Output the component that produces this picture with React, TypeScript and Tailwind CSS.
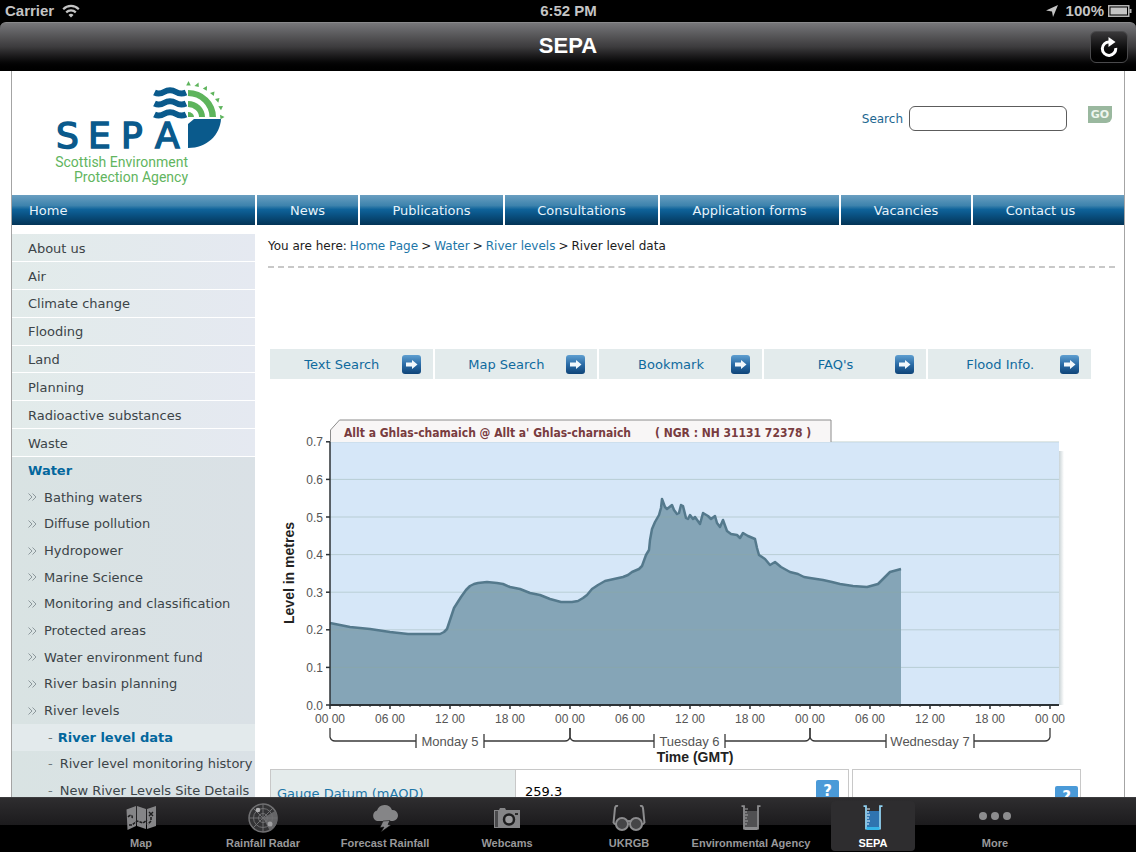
import type { ReactNode } from "react";

const topNav = ["Home", "News", "Publications", "Consultations", "Application forms", "Vacancies", "Contact us"];

const sections = [
  "About us",
  "Air",
  "Climate change",
  "Flooding",
  "Land",
  "Planning",
  "Radioactive substances",
  "Waste",
];

const waterPages = [
  "Bathing waters",
  "Diffuse pollution",
  "Hydropower",
  "Marine Science",
  "Monitoring and classification",
  "Protected areas",
  "Water environment fund",
  "River basin planning",
  "River levels",
];

const quickLinks = ["Text Search", "Map Search", "Bookmark", "FAQ's", "Flood Info."];

// x, y pairs in chart space: 10 units per hour, 330 is Monday 00:00
const levels: [number, number][] = [
  [330, 623], [340, 625], [350, 627], [370, 629], [390, 632], [408, 634], [424, 634], [440, 634], [444, 632],
  [447, 629], [450, 620], [454, 608], [461, 597], [466, 590], [470, 586], [474, 584], [478, 583], [487, 582],
  [497, 583], [503, 584], [510, 587], [520, 589], [530, 593], [540, 595], [550, 599], [561, 602], [572, 602],
  [578, 601], [583, 598], [587, 595], [592, 589], [598, 585], [605, 581], [614, 579], [623, 577], [628, 575],
  [632, 572], [639, 569], [642, 566], [646, 555], [649, 550], [650, 540], [652, 529], [655, 522], [659, 515],
  [661, 508], [662, 499], [665, 507], [667, 509], [672, 505], [674, 510], [677, 514], [679, 513], [681, 505],
  [683, 506], [686, 518], [688, 519], [690, 515], [693, 519], [695, 517], [700, 524], [703, 513], [708, 516],
  [711, 519], [715, 516], [717, 523], [720, 527], [723, 520], [727, 531], [731, 534], [737, 535], [740, 538],
  [743, 533], [748, 536], [755, 539], [757, 548], [759, 555], [765, 559], [770, 565], [775, 562], [781, 567],
  [790, 572], [798, 574], [804, 577], [810, 578], [823, 580], [832, 582], [840, 584], [853, 586], [867, 587],
  [878, 584], [884, 578], [890, 572], [901, 569],
];

const levelLine = levels.map(([x, y]) => `${x},${y}`).join(" ");

function WifiIcon() {
  return (
    <svg viewBox="0 0 18 14" className="h-[14px] w-[18px]" fill="none" stroke="#c4c4c4" strokeWidth="2.2" aria-hidden="true">
      <path d="M1.2 5.2a11 11 0 0 1 15.6 0" />
      <path d="M4.2 8.4a6.8 6.8 0 0 1 9.6 0" />
      <path d="M9 13.4 6.5 10.9a3.6 3.6 0 0 1 5 0z" fill="#c4c4c4" stroke="none" />
    </svg>
  );
}

function SepaLogo() {
  return (
    <svg viewBox="54 78 176 112" className="h-[112px] w-[176px]" role="img" aria-label="SEPA">
      <g fill="none" stroke="#0a5a8c" strokeWidth="6">
        <path d="M154.500 92.500c4 2 7 1 10-.8s8-1.800 11 0 6 2.800 10.500.8" />
        <path d="M154.500 103.500c4 2 7 1 10-.8s8-1.800 11 0 6 2.800 10.500.8" />
        <path d="M154.500 114.500c4 2 7 1 10-.8s8-1.800 11 0 6 2.800 10.500.8" />
      </g>
      <g fill="#5eb45c">
        <path d="M188 90a28 27 0 0 1 28 27h-6.500a21.500 21 0 0 0-21.500-21z" />
        <path d="M188 101a17 16 0 0 1 17 16h-6a11 10 0 0 0-11-10z" />
        <path d="M188 112a6 5 0 0 1 6 5h-6z" />
        <path d="M188.500 81l2.300 4.500h-4.600z" />
        <path d="M198.500 82.500l.3 4.500-4.400-1z" />
        <path d="M207 86l-.2 4.700-4-2.300z" />
        <path d="M214.500 91.500l-.7 4.500-3.800-3z" />
        <path d="M219.500 98l-1.200 4.700-3.300-3.700z" />
        <path d="M223 106l-2 4.300-2.700-4z" />
        <path d="M224.500 117l-4 2.300-.5-4.600z" />
      </g>
      <path d="M194 119h27c-1 16-14 29-33 29v-24z" fill="#0a5a8c" />
      <text
        x="56 88 121 155"
        y="148"
        fill="#0a5a8c"
        stroke="#0a5a8c"
        strokeWidth="1.500"
        fontSize="36"
        fontFamily="'DejaVu Sans', sans-serif"
      >
        SEPA
      </text>
      <g fill="#62b560" fontSize="14" fontFamily="Roboto, sans-serif" textAnchor="end">
        <text x="188" y="167">Scottish Environment</text>
        <text x="188" y="182">Protection Agency</text>
      </g>
    </svg>
  );
}

function ArrowBadge() {
  return (
    <svg viewBox="0 0 19 19" className="mr-3 h-[19px] w-[19px] shrink-0" aria-hidden="true">
      <defs>
        <linearGradient id="arrow-badge" x1="0" y1="0" x2="0" y2="1">
          <stop offset="0" stopColor="#5f9fd0" />
          <stop offset="0.5" stopColor="#2a6ba6" />
          <stop offset="1" stopColor="#0e4478" />
        </linearGradient>
      </defs>
      <rect width="19" height="19" rx="3" fill="url(#arrow-badge)" />
      <path d="M4 7.500h6V5l5.500 4.500L10 14v-2.500H4z" fill="#f2f8fc" />
    </svg>
  );
}

function DayBracket({ start, label, left, right }: { start: number; label: string; left: number; right: number }) {
  const end = start + 240;
  return (
    <g fill="none" stroke="#3a3a3a" strokeWidth="1.300">
      <path d={`M${start} 728v9q1 4 5 4H${left}M${left} 734v14`} />
      <path d={`M${end} 728v9q-1 4-5 4H${right}M${right} 734v14`} />
      <text x={(left + right) / 2} y="746" fill="#555" stroke="none" textAnchor="middle" fontSize="13">
        {label}
      </text>
    </g>
  );
}

function LevelChart() {
  const gridRows = [0, 1, 2, 3, 4, 5, 6, 7];
  const hours = Array.from({ length: 73 }, (_, i) => i);

  return (
    <svg
      viewBox="270 415 821 352"
      className="mt-9 block w-full"
      fontFamily="'Liberation Sans', Arial, sans-serif"
      role="img"
      aria-label="River level chart"
    >
      <defs>
        <linearGradient id="plot-shadow" x1="0" y1="0" x2="1" y2="0">
          <stop offset="0" stopColor="#c9d3d6" />
          <stop offset="1" stopColor="#fff" />
        </linearGradient>
      </defs>
      <rect x="1059" y="451" width="5" height="254" fill="url(#plot-shadow)" />
      <rect x="330" y="442" width="729" height="263" fill="#d6e7f8" />
      <polygon points={`330,705 ${levelLine} 901,705`} fill="#85a5b7" />
      {gridRows.map((n) => (
        <line key={n} x1="330" x2="1059" y1={705 - n * 37.6} y2={705 - n * 37.6} stroke="#8fa9a0" strokeOpacity="0.4" />
      ))}
      <polyline points={levelLine} fill="none" stroke="#54798c" strokeWidth="2.500" strokeLinejoin="round" />

      <path d="M330.500 442v-12l9-10H831v22" fill="#f8f6f6" stroke="#8c8c8c" />
      <g fill="#783c3f" fontSize="12" fontWeight="700" fontFamily="'DejaVu Sans Condensed', Tahoma, sans-serif">
        <text x="344" y="437">Allt a Ghlas-chamaich @ Allt a&apos; Ghlas-charnaich</text>
        <text x="655" y="437">( NGR : NH 31131 72378 )</text>
      </g>

      <g stroke="#2c3236" strokeWidth="1.500">
        <line x1="330" x2="330" y1="442" y2="706" />
        <line x1="330" x2="1059" y1="705" y2="705" strokeWidth="2" />
        {gridRows.map((n) => (
          <line key={n} x1="326" x2="330" y1={705 - n * 37.6} y2={705 - n * 37.6} />
        ))}
        {hours.map((h) => (
          <line
            key={h}
            x1={330 + h * 10}
            x2={330 + h * 10}
            y1="705"
            y2={h % 6 ? 707 : 709}
            strokeWidth={h % 6 ? 1 : 1.5}
          />
        ))}
      </g>
      <g fill="#555" fontSize="12">
        {gridRows.map((n) => (
          <text key={n} x="323" y={709.5 - n * 37.6} textAnchor="end">
            {(n / 10).toFixed(1)}
          </text>
        ))}
        {hours
          .filter((h) => h % 6 === 0)
          .map((h) => (
            <text key={h} x={330 + h * 10} y="723" textAnchor="middle">
              {`${String(h % 24).padStart(2, "0")} 00`}
            </text>
          ))}
      </g>
      <DayBracket start={330} label="Monday 5" left={416} right={484} />
      <DayBracket start={570} label="Tuesday 6" left={654} right={725} />
      <DayBracket start={810} label="Wednesday 7" left={886} right={974} />
      <g fill="#222" fontSize="14" fontWeight="700" textAnchor="middle">
        <text x="695" y="762">Time (GMT)</text>
        <text transform="translate(294 573) rotate(-90)">Level in metres</text>
      </g>
    </svg>
  );
}

function HelpButton() {
  return (
    <button
      type="button"
      aria-label="Help"
      className="flex h-[22px] w-[23px] items-center justify-center rounded-xs bg-[#4a9ad8] text-[15px] font-bold text-white"
    >
      ?
    </button>
  );
}

function Beaker({ active = false }: { active?: boolean }) {
  return (
    <svg viewBox="0 0 20 26" className="h-[26px] w-5" aria-hidden="true">
      <path d="M3.500 6h13v17h-13z" fill={active ? "#2f74b0" : "#505052"} />
      <path d="M.5 1.200H3v22.300h14V1.200h2.500" fill="none" stroke={active ? "#8fd0f0" : "#8c8c8e"} strokeWidth="1.800" />
      <path d="M3.500 23.500h13" stroke={active ? "#35b4e8" : "#8c8c8e"} strokeWidth="3" />
      <path d="M4 4h3M4 7h2M4 10h3M4 13h2M4 16h3M4 19h2" stroke={active ? "#e4f4ff" : "#a4a4a6"} />
    </svg>
  );
}

const tabs: { label: string; icon: ReactNode }[] = [
  {
    label: "Map",
    icon: (
      <svg viewBox="0 0 30 26" className="h-[26px] w-[30px]" aria-hidden="true">
        <path d="M.5 4.500 10 1v20L1.500 25zM11 1l9 3v20l-9-3zM21 4l9-3v20l-9 3z" fill="#858587" />
        <path d="M2 12c3-3 5-2 4 2M3 20h3l5-4 6 2 4-3M25 12v4l-3 3" fill="none" stroke="#1d1d1e" strokeWidth="1.500" strokeDasharray="3 1" />
        <path d="m23 7 4 4m0-4-4 4" stroke="#1d1d1e" strokeWidth="1.400" />
      </svg>
    ),
  },
  {
    label: "Rainfall Radar",
    icon: (
      <svg viewBox="0 0 30 30" className="h-[30px] w-[30px]" fill="none" stroke="#707072" aria-hidden="true">
        <circle cx="15" cy="15" r="14" fill="#333335" strokeWidth="1.500" />
        <path d="M15 15 27 8a14 14 0 0 1-5 20z" fill="#656567" stroke="none" />
        <circle cx="15" cy="15" r="9.500" />
        <circle cx="15" cy="15" r="4.500" />
        <path d="M1 15h28M15 1v28M5 5l20 20M25 5 5 25" />
        <circle cx="10" cy="7" r="2.300" fill="#b0b0b2" stroke="none" />
        <circle cx="22" cy="21" r="2.500" fill="#a0a0a2" stroke="none" />
      </svg>
    ),
  },
  {
    label: "Forecast Rainfall",
    icon: (
      <svg viewBox="0 0 28 28" className="h-[28px] w-[28px]" fill="#858587" aria-hidden="true">
        <path d="M6 17a5.500 5.500 0 0 1 0-10.500A8 8 0 0 1 21 6a5.500 5.500 0 0 1 1 11z" />
        <path d="m12 17 7-.5-2 4 3 .5-10 7 3-5-4 .5z" stroke="#111" strokeWidth=".6" />
      </svg>
    ),
  },
  {
    label: "Webcams",
    icon: (
      <svg viewBox="0 0 28 20" className="h-5 w-7" aria-hidden="true">
        <path d="M1 2h5l1-2h5l1 2h14v18H1z" fill="#858587" />
        <path d="M2 3h3v16H2z" fill="#4a4a4c" />
        <circle cx="16" cy="11.500" r="5" fill="#9a9a9c" stroke="#1d1d1e" strokeWidth="2.500" />
        <path d="M22 5h3v2h-3z" fill="#2a2a2a" />
      </svg>
    ),
  },
  {
    label: "UKRGB",
    icon: (
      <svg viewBox="0 0 34 26" className="h-[26px] w-[34px]" fill="none" stroke="#8c8c8e" strokeWidth="2" aria-hidden="true">
        <path d="M6 1C2.500 0 3 4 2.500 8L1.500 18M28 1c3.500-1 3 3 3.500 7l1 10" />
        <circle cx="10" cy="19" r="6" fill="#454547" />
        <circle cx="24" cy="19" r="6" fill="#454547" />
        <path d="M1.500 18l3 2M32.500 18l-3 2M15 17q2-2 4 0" />
      </svg>
    ),
  },
  { label: "Environmental Agency", icon: <Beaker /> },
  { label: "SEPA", icon: <Beaker active /> },
  {
    label: "More",
    icon: (
      <svg viewBox="0 0 32 8" className="mb-1 h-2 w-8" fill="#8c8c8e" aria-hidden="true">
        <circle cx="4" cy="4" r="4" />
        <circle cx="16" cy="4" r="4" />
        <circle cx="28" cy="4" r="4" />
      </svg>
    ),
  },
];

function DeviceHeader() {
  return (
    <header className="shrink-0 bg-black font-['Liberation_Sans',Arial,sans-serif] font-bold">
      <div className="grid h-[22px] grid-cols-3 items-center pr-1 pl-[5px] text-[15px] text-[#c4c4c4]">
        <div className="flex items-center gap-2">
          <span>Carrier</span>
          <WifiIcon />
        </div>
        <span className="text-center">6:52 PM</span>
        <div className="flex items-center justify-end gap-1">
          <svg viewBox="0 0 12 12" className="mr-1 h-3 w-3" fill="#c4c4c4" aria-hidden="true">
            <path d="M12 0 7 12 6 6.500 0 5.500z" />
          </svg>
          <span>100%</span>
          <svg viewBox="0 0 24 12" className="h-3 w-6" aria-hidden="true">
            <rect x=".75" y=".75" width="20" height="10.500" fill="none" stroke="#b4b4b4" strokeWidth="1.500" />
            <rect x="2.500" y="2.500" width="16.500" height="7" fill="#c4c4c4" />
            <path d="M21.500 4h2v4h-2z" fill="#b4b4b4" />
          </svg>
        </div>
      </div>
      <div className="grid h-[49px] grid-cols-[1fr_auto_1fr] items-center rounded-t-md border-t border-[#8a8a8c] bg-linear-to-b from-[#77777a] via-[#3c3b3d] to-black px-2">
        <h1 className="col-start-2 pb-[2px] text-[22px] leading-7 text-white">SEPA</h1>
        <button
          type="button"
          aria-label="Reload"
          className="flex h-8 w-[38px] items-center justify-center justify-self-end rounded-md border border-[#4a4a4c] bg-linear-to-b from-[#3a393b] to-black"
        >
          <svg viewBox="0 0 18 20" className="h-5 w-[18px]" aria-hidden="true">
            <path d="M9.500 5A6.700 6.700 0 1 0 15.700 11" fill="none" stroke="#fff" strokeWidth="3" />
            <path d="M8.500 0 15.500 5l-7 5z" fill="#fff" />
          </svg>
        </button>
      </div>
    </header>
  );
}

function Sidebar() {
  return (
    <nav aria-label="Section" className="w-[243px] shrink-0 text-[13px] text-[#3c4448]">
      <ul className="grid h-[223px] auto-rows-fr">
        {sections.map((name) => (
          <li key={name} className="flex items-center border-b border-white bg-linear-to-r from-[#e2ebea] to-[#e5e9f1] pt-[2px] pl-4">
            <a href="#">{name}</a>
          </li>
        ))}
      </ul>
      <div className="bg-linear-to-r from-[#d9e3e3] to-[#dae1e6]">
        <a href="#" className="flex h-[27px] items-center pl-4 font-bold text-[#03679d]">
          Water
        </a>
        <ul className="grid h-[240px] auto-rows-fr">
          {waterPages.map((name) => (
            <li key={name} className="flex items-center gap-[7px] pl-4">
              <svg viewBox="0 0 9 8" className="h-2 w-[9px]" fill="none" stroke="#8d989c" aria-hidden="true">
                <path d="m.5.5 3.500 3.500-3.500 3.500M4.500.5 8 4 4.500 7.500" />
              </svg>
              <a href="#">{name}</a>
            </li>
          ))}
        </ul>
        <ul className="grid h-[80px] auto-rows-fr">
          <li className="flex items-center gap-[5px] bg-[#e3eaec] pl-9 font-bold text-[#03679d]">
            <span className="font-normal text-[#6d777b]">-</span>
            <a href="#">River level data</a>
          </li>
          {["River level monitoring history", "New River Levels Site Details"].map((name) => (
            <li key={name} className="flex items-center gap-[7px] pl-9 whitespace-nowrap">
              <span className="text-[#6d777b]">-</span>
              <a href="#">{name}</a>
            </li>
          ))}
        </ul>
      </div>
    </nav>
  );
}

function TabBar() {
  return (
    <nav
      aria-label="Tabs"
      className="flex h-[55px] shrink-0 justify-center gap-[38px] border-t border-[#3c3c3e] bg-[linear-gradient(#2e2d2f,#1c1b1d_50%,#000_50%)] pt-[3px] pb-px font-['Liberation_Sans',Arial,sans-serif] text-[11px] font-bold"
    >
      {tabs.map(({ label, icon }) => (
        <button
          key={label}
          type="button"
          className={`flex w-[84px] flex-col items-center justify-start rounded-sm ${
            label === "SEPA" ? "bg-[#2e2d2f] text-white" : "text-[#98989a]"
          }`}
        >
          <span className="flex h-[35px] items-center">{icon}</span>
          <span className="leading-4 whitespace-nowrap">{label}</span>
        </button>
      ))}
    </nav>
  );
}

export default function App() {
  return (
    <div className="flex h-screen flex-col bg-white font-['DejaVu_Sans',Verdana,sans-serif]">
      <DeviceHeader />
      <main className="min-h-0 flex-1 overflow-hidden">
        <div className="mr-[11px] ml-[11px] border-x border-[#a4a4a4]">
          <div className="flex h-[124px] items-start justify-between pt-[7px] pr-3 pl-[42px]">
            <SepaLogo />
            <form className="flex items-start pt-7 text-xs text-[#1c6690]">
              <label htmlFor="search" className="pt-[5px] pr-[6px]">
                Search
              </label>
              <input id="search" type="text" className="h-[25px] w-[158px] rounded-md border border-[#5c5c5c] bg-white px-2" />
              <button
                type="submit"
                className="ml-[21px] h-[17px] w-6 rounded-br-md bg-[#9ab89f] text-[11px] leading-none font-bold text-[#eef6ee]"
              >
                GO
              </button>
            </form>
          </div>

          <nav
            aria-label="Main"
            className="grid h-[30px] grid-cols-[245px_103px_145px_155px_181px_132px_1fr] bg-[linear-gradient(#6a9fc1,#3d83ad_35%,#0f639a_48%,#0a5385_65%,#033456)] text-[13px] text-[#e8f3fa]"
          >
            {topNav.map((name) => (
              <a
                key={name}
                href="#"
                className="flex items-center justify-center border-r-2 border-white pt-[2px] first:justify-start first:pl-[17px] last:border-r-0 last:pr-4"
              >
                {name}
              </a>
            ))}
          </nav>

          <div className="flex items-start pt-[9px]">
            <Sidebar />
            <div className="min-w-0 flex-1 pr-[9px] pl-[13px]">
              <p className="flex h-[34px] gap-[3px] border-b-2 border-dashed border-[#c8c8c8] pt-1 text-xs text-[#1c1c1c]">
                You are here:
                <a href="#" className="text-[#1c76a8]">Home Page</a>
                <span>&gt;</span>
                <a href="#" className="text-[#1c76a8]">Water</a>
                <span>&gt;</span>
                <a href="#" className="text-[#1c76a8]">River levels</a>
                <span>&gt;</span>
                <span>River level data</span>
              </p>

              <div className="mt-[81px] ml-[2px] max-w-[821px]">
                <div className="grid grid-cols-5 gap-[2px]">
                  {quickLinks.map((name) => (
                    <a key={name} href="#" className="flex h-[30px] items-center bg-[#e3ebec] text-[13px] text-[#0f6a9e]">
                      <span className="flex-1 pt-px pl-3 text-center">{name}</span>
                      <ArrowBadge />
                    </a>
                  ))}
                </div>
                <LevelChart />
                <div className="mt-[2px] flex gap-[3px] pr-[10px] text-[13px]">
                  <table className="w-[579px] border-collapse border border-[#c8c8c8]">
                    <tbody>
                      <tr className="h-[50px] align-top">
                        <th scope="row" className="w-[245px] bg-[#e4ebeb] pt-[14px] pl-[6px] text-left font-normal">
                          <a href="#" className="text-[#1c76a8]">Gauge Datum (mAOD)</a>
                        </th>
                        <td className="border-l border-[#c8c8c8] pt-[12px] pl-[9px]">259.3</td>
                        <td className="flex justify-end pt-[10px] pr-[9px]">
                          <HelpButton />
                        </td>
                      </tr>
                    </tbody>
                  </table>
                  <div className="flex flex-1 justify-end border border-[#c8c8c8] pt-[16px] pr-[2px]">
                    <HelpButton />
                  </div>
                </div>
              </div>
            </div>
          </div>
        </div>
      </main>
      <TabBar />
    </div>
  );
}
